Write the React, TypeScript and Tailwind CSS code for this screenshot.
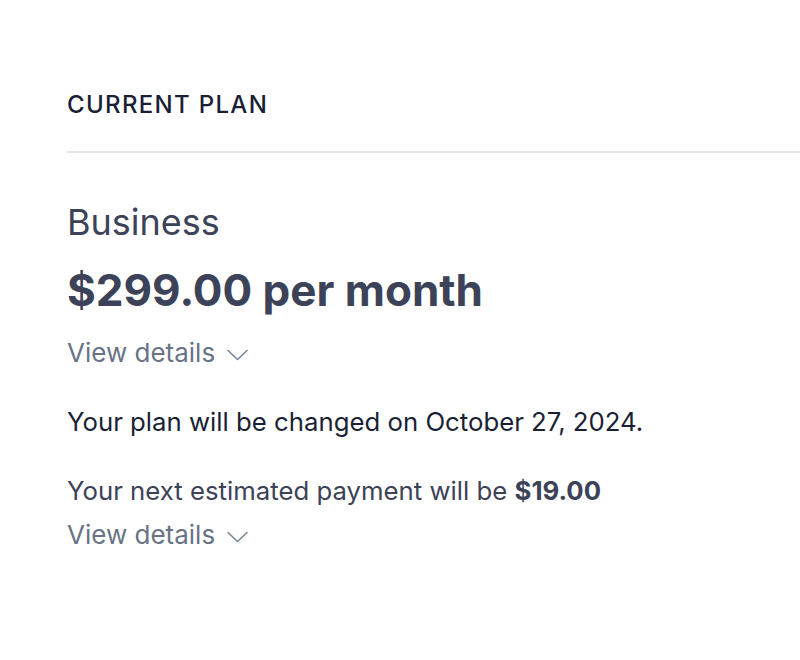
import React from "react";

function ViewDetails() {
  return (
    <button className="flex items-center gap-[12px] text-[26px] leading-[30px] text-[#697386]">
      <span>View details</span>
      <svg width="21" height="12" viewBox="0 0 21 12" fill="none" className="mt-[4px]">
        <path d="M1 1.5 L10.5 10.5 L20 1.5" stroke="#7a8496" strokeWidth="1.6" strokeLinecap="round" strokeLinejoin="round" />
      </svg>
    </button>
  );
}

export default function App() {
  return (
    <div className="min-h-[660px] w-[800px] overflow-hidden bg-white font-['Inter',sans-serif]">
      <div className="pl-[67px] pt-[90px]">
        <h3 className="text-[24px] leading-[30px] font-medium tracking-[0.055em] text-[#1a1f36]">
          CURRENT PLAN
        </h3>
        <div className="mt-[31px] h-[2px] bg-[#e6e6e8]" />

        <div className="pt-[47px]">
          <div className="text-[36px] leading-[44px] text-[#3c4257]">Business</div>
          <div className="mt-[20px] text-[44px] leading-[52px] font-bold text-[#3c4257]">
            $299.00 per month
          </div>
          <div className="mt-[22px]">
            <ViewDetails />
          </div>

          <p className="mt-[38px] text-[25.75px] leading-[32px] text-[#1a1f36]">
            Your plan will be changed on October 27, 2024.
          </p>

          <p className="mt-[37px] text-[25.75px] leading-[32px] text-[#3c4257]">
            Your next estimated payment will be <span className="font-bold">$19.00</span>
          </p>
          <div className="mt-[13px]">
            <ViewDetails />
          </div>
        </div>
      </div>
    </div>
  );
}
